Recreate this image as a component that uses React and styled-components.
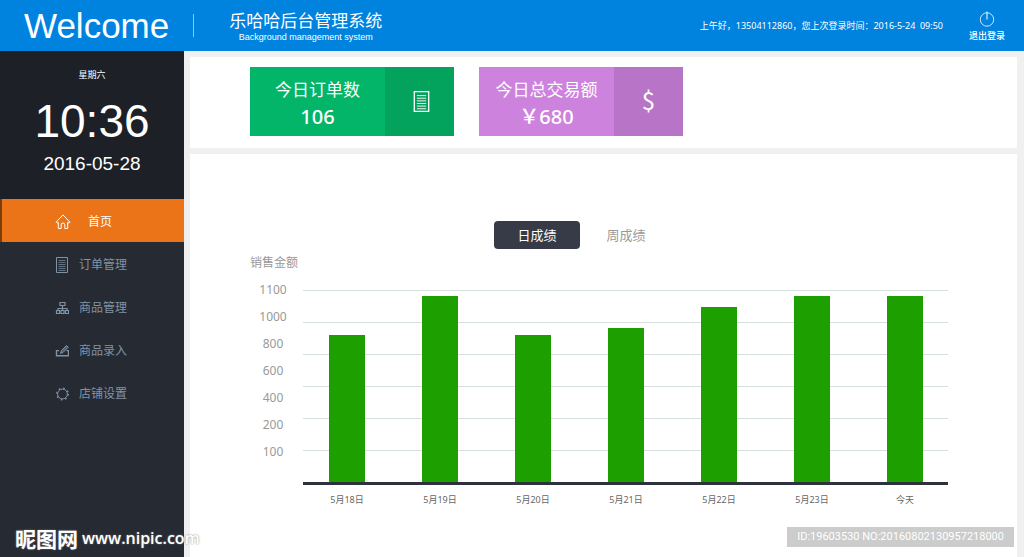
import React, { useState } from 'react'
import styled, { createGlobalStyle, css } from 'styled-components'

const GlobalStyle = createGlobalStyle`
    * {
        box-sizing: border-box;
    }

    body {
        margin: 0;
        background: #f0f0f0;
        font-family: 'Noto Sans', 'Noto Sans CJK SC', sans-serif;
    }
`

const Page = styled.div`
    display: flex;
    flex-direction: column;
    min-height: 100vh;
`

const TopBar = styled.header`
    display: flex;
    align-items: center;
    height: 51px;
    padding: 0 19px 0 24px;
    background: #0082df;
    color: #fff;
`

const Welcome = styled.div`
    padding-right: 24px;
    font: 35px/51px 'Liberation Sans', sans-serif;
`

const Brand = styled.div`
    display: flex;
    align-items: center;
    height: 23px;
    padding-left: 35px;
    border-left: 1px solid #8cc8f2;
    text-align: center;
`

const Title = styled.h1`
    margin: 0;
    padding-top: 2px;
    font-size: 17px;
    font-weight: 400;
    line-height: 22px;
`

const Subtitle = styled.div`
    font: 9px/11px 'Liberation Sans', sans-serif;
`

const Greeting = styled.div`
    margin-left: auto;
    font-size: 9px;
    line-height: 14px;
    white-space: pre;
`

const Logout = styled.button`
    display: flex;
    flex-direction: column;
    align-items: center;
    margin-left: 26px;
    padding: 2px 0 0;
    border: 0;
    background: none;
    color: #fff;
    font: 500 9px/14px 'Noto Sans', 'Noto Sans CJK SC', sans-serif;
    cursor: pointer;

    svg {
        margin-bottom: 2px;
    }
`

const Body = styled.div`
    display: flex;
    flex: 1;
`

const Sidebar = styled.aside`
    flex: 0 0 184px;
    background: #262a33;
`

const Clock = styled.section`
    height: 148px;
    padding-top: 17px;
    background: #1d2027;
    color: #fff;
    text-align: center;
`

const Weekday = styled.div`
    font-size: 9px;
    line-height: 14px;
`

const Time = styled.div`
    padding-top: 12px;
    font: 46px/54px 'Liberation Sans', sans-serif;
`

const Today = styled.div`
    padding-top: 4px;
    font: 19px/24px 'Liberation Sans', sans-serif;
`

const NavItem = styled.a`
    display: flex;
    align-items: center;
    gap: 10px;
    height: 43px;
    padding: 2px 0 0 53px;
    border-left: 2px solid transparent;
    color: #8093a5;
    font-size: 12px;
    line-height: 18px;
    text-decoration: none;

    ${props =>
        props.$active &&
        css`
            gap: 17px;
            border-color: #7d3c08;
            background: #ea7417;
            color: #fff;
        `}
`

const Main = styled.main`
    display: flex;
    flex: 1;
    flex-direction: column;
    gap: 6px;
    padding: 6px 7px 0 6px;
`

const Summary = styled.section`
    display: flex;
    gap: 25px;
    padding: 10px 60px 12px;
    background: #fff;
`

const Tile = styled.div`
    display: flex;
    width: 204px;
    height: 69px;
    background: ${props => props.$color};
    color: #fff;
`

const TileText = styled.div`
    flex: 1;
    padding-top: 10px;
    text-align: center;
`

const TileLabel = styled.div`
    font-size: 17px;
    line-height: 26px;
`

const TileValue = styled.div`
    font-size: 20px;
    font-weight: 500;
    line-height: 28px;
`

const TileIcon = styled.div`
    display: flex;
    align-items: center;
    justify-content: center;
    width: 69px;
    padding-left: 4px;
    background: ${props => props.$color};
`

const Dollar = styled.span`
    padding: 0 4px 4px 0;
    font: 24px/28px 'Noto Sans CJK SC', sans-serif;
`

const Report = styled.section`
    flex: 1;
    padding: 67px 69px 48px 60px;
    background: #fff;
`

const Tabs = styled.div`
    display: flex;
    justify-content: center;
    gap: 3px;
    padding-right: 35px;
`

const Tab = styled.button`
    width: 86px;
    height: 28px;
    padding: 0;
    border: 0;
    border-radius: 4px;
    background: ${props => (props.$active ? '#363b47' : 'none')};
    color: ${props => (props.$active ? '#fff' : '#999')};
    font: 13px/20px 'Noto Sans', 'Noto Sans CJK SC', sans-serif;
    cursor: pointer;
`

const Chart = styled.div`
    display: flex;
    gap: 7px;
`

const YAxis = styled.div`
    width: 46px;
    color: #999;
    font-size: 12px;
    line-height: 27px;
    text-align: center;
    white-space: nowrap;
`

const PlotArea = styled.div`
    flex: 1;
    padding-top: 41px;
`

const Plot = styled.div`
    display: flex;
    align-items: flex-end;
    justify-content: space-between;
    height: 195px;
    padding: 0 25px 0 26px;
    border-bottom: 3px solid #2e323d;
    background: repeating-linear-gradient(#d8dfdf 0 1px, #fff 1px 32px);
`

const Bar = styled.div`
    width: 36px;
    background: #1e9f00;
`

const XAxis = styled.div`
    display: flex;
    justify-content: space-between;
    padding: 8px 25px 0 26px;
    color: #666;
    font-size: 9px;
    line-height: 14px;
`

const XLabel = styled.div`
    width: 36px;
    text-align: center;
    white-space: nowrap;
`

const SiteMark = styled.div`
    position: absolute;
    bottom: 6px;
    left: 15px;
    display: flex;
    align-items: center;
    gap: 4px;
    color: #fff;
    font: 600 16px/26px 'Open Sans', sans-serif;
    text-shadow: 0 0 2px #777;

    b {
        font: 700 21px/26px 'Noto Sans CJK SC', sans-serif;
    }
`

const ImageId = styled.div`
    position: absolute;
    right: 10px;
    bottom: 10px;
    padding: 0 10px;
    background: #ccc;
    color: #fff;
    font: 11px/20px Roboto, sans-serif;
`

const PowerIcon = () => (
    <svg width="16" height="16" viewBox="0 0 16 16" fill="none" stroke="#fff">
        <circle cx="8" cy="8.5" r="6.7" strokeWidth="0.8" />
        <path d="M8 .5v8" />
    </svg>
)

const HomeIcon = () => (
    <svg width="16" height="16" viewBox="0 0 16 16" fill="none" stroke="currentColor" strokeLinejoin="round">
        <path d="M1 8.2 8 .9l7 7.3-1 1-1.3-.9v6.2H9.8V10c0-1.2-3.6-1.2-3.6 0v4.5H3.3V8.3L2 9.2z" />
    </svg>
)

const ListIcon = ({ width = 14, height = 16 }) => (
    <svg width={width} height={height} viewBox="0 0 14 16" fill="none" stroke="currentColor">
        <path d="M1.5.5h11v15h-11z" />
        <path d="M3.5 3.5h7M3.5 5.5h7M3.5 7.5h7M3.5 9.5h7M3.5 11.5h7M3.5 13.5h7" strokeWidth="0.7" />
    </svg>
)

const TreeIcon = () => (
    <svg width="14" height="14" viewBox="0 0 14 14" fill="none" stroke="currentColor" strokeWidth="1.2">
        <path d="M5 1.5h5v3H5zM1.5 9.5h3v3h-3zM6 9.5h3v3H6zM10.5 9.5h3v3h-3z" />
        <path d="M7.5 4.5v5M3 9.5v-2h9v2" />
    </svg>
)

const EditIcon = () => (
    <svg width="14" height="14" viewBox="0 0 14 14" fill="none" stroke="currentColor">
        <path d="M4 6.6H1.5v5.2h12V6.6h-2" strokeWidth="1.4" />
        <path d="m5.6 9.4.6-2.6L11.5 1.5l1.7 1.7L7.9 8.6z" fill="currentColor" fillOpacity="0.5" />
    </svg>
)

const GearIcon = () => (
    <svg width="14" height="14" viewBox="0 0 14 14" fill="none" stroke="currentColor">
        <circle cx="7.5" cy="7" r="4.9" />
        <circle cx="7.5" cy="7" r="5.7" strokeWidth="1.5" strokeDasharray="1.6 2.877" />
    </svg>
)

const MENU = [
    { label: '首页', Icon: HomeIcon },
    { label: '订单管理', Icon: ListIcon },
    { label: '商品管理', Icon: TreeIcon },
    { label: '商品录入', Icon: EditIcon },
    { label: '店铺设置', Icon: GearIcon }
]

const TICKS = [1100, 1000, 800, 600, 400, 200, 100]

// share of the plot height, in percent
const SALES = [
    { day: '5月18日', share: 76.5 },
    { day: '5月19日', share: 97 },
    { day: '5月20日', share: 76.5 },
    { day: '5月21日', share: 80 },
    { day: '5月22日', share: 91 },
    { day: '5月23日', share: 97 },
    { day: '今天', share: 97 }
]

const SalesChart = () => (
    <Chart>
        <YAxis>
            <div>销售金额</div>
            {TICKS.map(tick => (
                <div key={tick}>{tick}</div>
            ))}
        </YAxis>
        <PlotArea>
            <Plot>
                {SALES.map(({ day, share }) => (
                    <Bar key={day} style={{ height: `${share}%` }} />
                ))}
            </Plot>
            <XAxis>
                {SALES.map(({ day }) => (
                    <XLabel key={day}>{day}</XLabel>
                ))}
            </XAxis>
        </PlotArea>
    </Chart>
)

export default () => {
    const [tab, setTab] = useState('日成绩')

    return (
        <Page>
            <GlobalStyle />
            <TopBar>
                <Welcome>Welcome</Welcome>
                <Brand>
                    <div>
                        <Title>乐哈哈后台管理系统</Title>
                        <Subtitle>Background management system</Subtitle>
                    </div>
                </Brand>
                <Greeting>
                    上午好，13504112860，您上次登录时间：2016-5-24{'  '}09:50
                </Greeting>
                <Logout type="button">
                    <PowerIcon />
                    退出登录
                </Logout>
            </TopBar>
            <Body>
                <Sidebar>
                    <Clock>
                        <Weekday>星期六</Weekday>
                        <Time>10:36</Time>
                        <Today>2016-05-28</Today>
                    </Clock>
                    <nav>
                        {MENU.map(({ label, Icon }, i) => (
                            <NavItem key={label} href="#" $active={i === 0}>
                                <Icon />
                                {label}
                            </NavItem>
                        ))}
                    </nav>
                </Sidebar>
                <Main>
                    <Summary>
                        <Tile $color="#03b568">
                            <TileText>
                                <TileLabel>今日订单数</TileLabel>
                                <TileValue>106</TileValue>
                            </TileText>
                            <TileIcon $color="#03a25d">
                                <ListIcon width={19} height={21} />
                            </TileIcon>
                        </Tile>
                        <Tile $color="#cd82de">
                            <TileText>
                                <TileLabel>今日总交易额</TileLabel>
                                <TileValue>￥680</TileValue>
                            </TileText>
                            <TileIcon $color="#b874c6">
                                <Dollar>$</Dollar>
                            </TileIcon>
                        </Tile>
                    </Summary>
                    <Report>
                        <Tabs>
                            {['日成绩', '周成绩'].map(name => (
                                <Tab
                                    key={name}
                                    type="button"
                                    $active={tab === name}
                                    onClick={() => setTab(name)}
                                >
                                    {name}
                                </Tab>
                            ))}
                        </Tabs>
                        <SalesChart />
                    </Report>
                </Main>
            </Body>
            <SiteMark>
                <b>昵图网</b>
                www.nipic.com
            </SiteMark>
            <ImageId>ID:19603530 NO:20160802130957218000</ImageId>
        </Page>
    )
}
